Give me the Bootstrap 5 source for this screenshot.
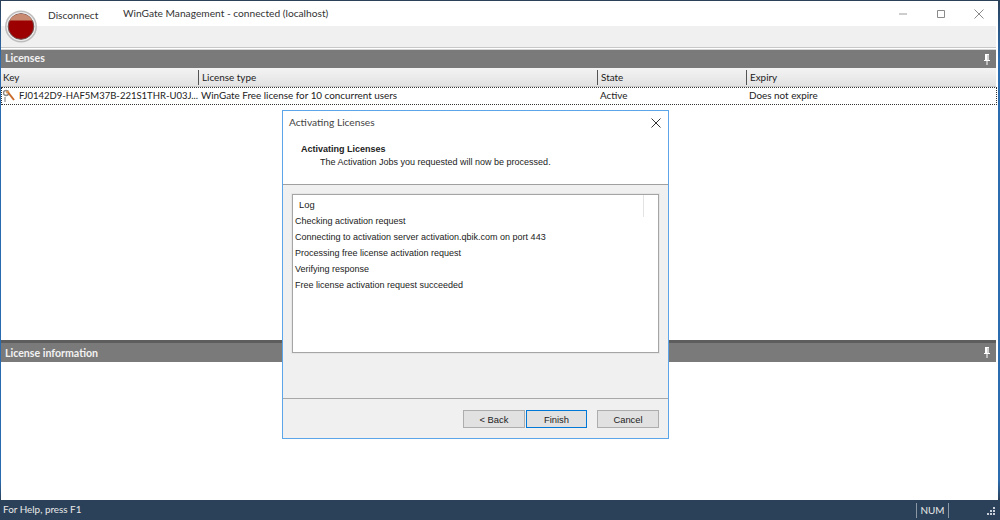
<!DOCTYPE html>
<html lang="en">
<head>
<meta charset="utf-8">
<title>WinGate Management</title>
<link href="https://cdn.jsdelivr.net/npm/bootstrap@5.3.0/dist/css/bootstrap.min.css" rel="stylesheet">
<style>
html,body{margin:0;height:520px;overflow:hidden;background:#2b4159;}
body{font-family:"Lato","Liberation Sans",sans-serif;font-size:10.2px;color:#222;line-height:1;}
.desk{width:1000px;height:520px;position:relative;background:linear-gradient(#2b4159 0,#2b6cb0 60px,#2b6cb0 480px,#2b4159 500px);}
.appwin{width:997px;height:499px;margin-left:1px;margin-top:1px;background:#fff;flex:none;}
.titlerow{height:25px;padding-left:47px;flex:none;}
.tb-label{width:75px;padding-top:3px;height:25px;line-height:22px;color:#333;}
.tb-title{line-height:19px;height:25px;padding-top:3px;color:#333;flex:1;}
.winbtn{width:38px;height:25px;}
.toolrow{height:21px;background:#f0f0f0;flex:none;margin-right:2px;}
.gapline{height:3px;background:#fff;border-top:1px solid #c8c8c8;border-bottom:1px solid #d4d4d4;flex:none;margin-right:2px;}
.panelbar{height:18px;background:#7a7a7a;color:#f2f2f2;font-weight:700;font-size:10.6px;padding-left:4px;line-height:17px;flex:none;margin-right:2px;}
.panelbar.tall{height:19px;line-height:20px;}
.pin{margin-right:6px;align-self:center;}
.headrow{height:19px;background:linear-gradient(#f4f4f4,#e2e2e2);border-bottom:1px solid #c8c8c8;flex:none;margin-right:2px;}
.hcell{border-left:1px solid #555;height:15px;margin-top:2px;padding-left:3px;line-height:14px;color:#222;font-size:9.9px;}
.c1{width:197px;border-left:0;padding-left:2px;}
.c2{width:399px;}
.c3{width:149px;}
.c4{flex:1;}
.datarow{height:18px;border:1px dotted #333;line-height:14px;color:#222;font-size:9.9px;flex:none;margin-right:1px;}
.dcell{padding-left:2px;white-space:nowrap;}
.d1{width:197px;padding-left:1px;}
.d1 svg{flex:none;}
.d1 span{font-size:9.5px;}
.d2{width:399px;}
.d3{width:149px;}
.listarea{height:235px;flex:none;}
.splitter{height:3px;background:#5d5d5d;flex:none;margin-right:2px;}
.infoarea{flex:1;}
.statusbar{height:20px;color:#e8e8e8;padding-left:3px;font-size:9.9px;flex:none;background:#2b4159;}
.numpane{border-left:1px solid #8b97a5;border-right:1px solid #8b97a5;height:15px;width:33px;margin-right:51px;text-align:center;line-height:15px;}
.wizard{position:absolute;left:282px;top:110px;width:387px;height:329px;background:#f0f0f0;border:1px solid #5ba6e8;font-family:"Liberation Sans",sans-serif;font-size:9px;color:#222;}
.wz-head{height:74px;background:#fff;border-bottom:1px solid #a0a0a0;flex:none;}
.wz-title{height:23px;padding-left:6px;font-family:"Lato",sans-serif;font-size:10.2px;line-height:23px;color:#444;}
.wz-close{margin-right:7px;}
.wz-h{font-weight:700;padding-left:18px;margin-top:9px;line-height:12px;font-size:9px;}
.wz-sub{padding-left:37px;line-height:13px;margin-top:1px;}
.logbox{margin:9px 9px 0 9px;height:159px;background:#fff;border:1px solid #a5a5a5;box-shadow:0 0 0 1px #e6e6e6;flex:none;}
.loghead{height:18px;padding-left:6px;line-height:20px;font-size:9.4px;}
.loghead span{display:block;width:345px;height:22px;border-right:1px solid #e4e4e4;}
.logline{height:16px;line-height:16px;padding-left:2px;white-space:nowrap;}
.logline:first-of-type{margin-top:8px;}
.wz-foot{margin-top:45px;border-top:1px solid #a8a8a8;height:40px;padding:11px 9px 0 0;flex:none;}
.wbtn{width:62px;height:18px;padding:0;border:1px solid #adadad;border-radius:0;background:#e1e1e1;font-size:9.4px;line-height:15px;color:#222;font-family:"Liberation Sans",sans-serif;}
.wbtn.primary{width:61px;border:1px solid #0078d7;box-shadow:inset 0 0 0 1px #e1e1e1;margin-left:1px;margin-right:10px;}
</style>
</head>
<body>
<div class="desk d-flex flex-column">
  <div class="appwin d-flex flex-column">
    <div class="titlerow d-flex">
      <div class="tb-label">Disconnect</div>
      <div class="tb-title">WinGate Management - connected (localhost)</div>
      <div class="d-flex">
        <div class="winbtn d-flex align-items-center justify-content-center"><svg width="10" height="10" viewBox="0 0 10 10"><path d="M1 5h8" stroke="#bdbdbd" stroke-width="1.500" fill="none"/></svg></div>
        <div class="winbtn d-flex align-items-center justify-content-center"><svg width="10" height="10" viewBox="0 0 10 10"><path d="M1.500 1.500h7v7h-7z" stroke="#8a8a8a" fill="none"/></svg></div>
        <div class="winbtn d-flex align-items-center justify-content-center"><svg width="10" height="10" viewBox="0 0 10 10"><path d="M.5.500l9 9M9.500.500l-9 9" stroke="#8a8a8a" fill="none"/></svg></div>
      </div>
    </div>
    <div class="toolrow"></div>
    <div class="gapline"></div>
    <div class="panelbar d-flex justify-content-between"><span>Licenses</span><svg class="pin" width="6" height="11" viewBox="0 0 6 11"><path d="M1 0h4v6h1v1H0V6h1zM2.500 7h1v4h-1z" fill="#fff"/><path d="M3.500 1h1v5h-1z" fill="#aaa"/></svg></div>
    <div class="headrow d-flex">
      <div class="hcell c1">Key</div><div class="hcell c2">License type</div><div class="hcell c3">State</div><div class="hcell c4">Expiry</div>
    </div>
    <div class="datarow d-flex">
      <div class="dcell d1 d-flex align-items-center gap-1"><svg width="12" height="14" viewBox="0 0 12 14"><circle cx="3" cy="4" r="2.500" fill="none" stroke="#8a8a8a" stroke-width="1.500"/><path d="M2 8v5" stroke="#8a8a8a" stroke-width="1.200"/><path d="M4 2l7 9" stroke="#c96a2a" stroke-width="2"/><path d="M6 2L3 4" stroke="#e0a060" stroke-width="1.500"/></svg><span>FJ0142D9-HAF5M37B-221S1THR-U03J...</span></div>
      <div class="dcell d2">WinGate Free license for 10 concurrent users</div>
      <div class="dcell d3">Active</div>
      <div class="dcell">Does not expire</div>
    </div>
    <div class="listarea"></div>
    <div class="splitter"></div>
    <div class="panelbar tall d-flex justify-content-between"><span>License information</span><svg class="pin" width="6" height="11" viewBox="0 0 6 11"><path d="M1 0h4v6h1v1H0V6h1zM2.500 7h1v4h-1z" fill="#fff"/><path d="M3.500 1h1v5h-1z" fill="#aaa"/></svg></div>
    <div class="infoarea"></div>
  </div>
  <div class="statusbar d-flex align-items-center justify-content-between">
    <span>For Help, press F1</span>
    <div class="numpane">NUM</div>
  </div>
  <svg class="position-absolute" style="left:5px;top:10px" width="32" height="33" viewBox="0 0 32 33"><circle cx="16" cy="16.500" r="15.200" fill="#ececec" stroke="#bdbdbd" stroke-width="1.500"/><circle cx="16" cy="16.500" r="12.800" fill="#9c0000" stroke="#6e5050"/><path d="M4.700 10.500A12.800 12.800 0 0 1 27.300 10.500z" fill="#c88a70"/></svg>
  <svg class="position-absolute" style="left:986px;top:507px" width="10" height="10" viewBox="0 0 10 10"><path d="M7 0h2v2H7zM4 3h2v2H4zM7 3h2v2H7zM1 6h2v2H1zM4 6h2v2H4zM7 6h2v2H7z" fill="#c9d2dc"/></svg>
  <div class="wizard d-flex flex-column">
    <div class="wz-head">
      <div class="wz-title d-flex justify-content-between align-items-center"><span>Activating Licenses</span><svg class="wz-close" width="10" height="10" viewBox="0 0 10 10"><path d="M.5.500l9 9M9.500.500l-9 9" stroke="#333" fill="none"/></svg></div>
      <div class="wz-h">Activating Licenses</div>
      <div class="wz-sub">The Activation Jobs you requested will now be processed.</div>
    </div>
    <div class="logbox">
      <div class="loghead"><span>Log</span></div>
      <div class="logline">Checking activation request</div>
      <div class="logline">Connecting to activation server activation.qbik.com on port 443</div>
      <div class="logline">Processing free license activation request</div>
      <div class="logline">Verifying response</div>
      <div class="logline">Free license activation request succeeded</div>
    </div>
    <div class="wz-foot d-flex justify-content-end">
      <button class="btn wbtn">&lt; Back</button>
      <button class="btn wbtn primary">Finish</button>
      <button class="btn wbtn">Cancel</button>
    </div>
  </div>
</div>
</body>
</html>
